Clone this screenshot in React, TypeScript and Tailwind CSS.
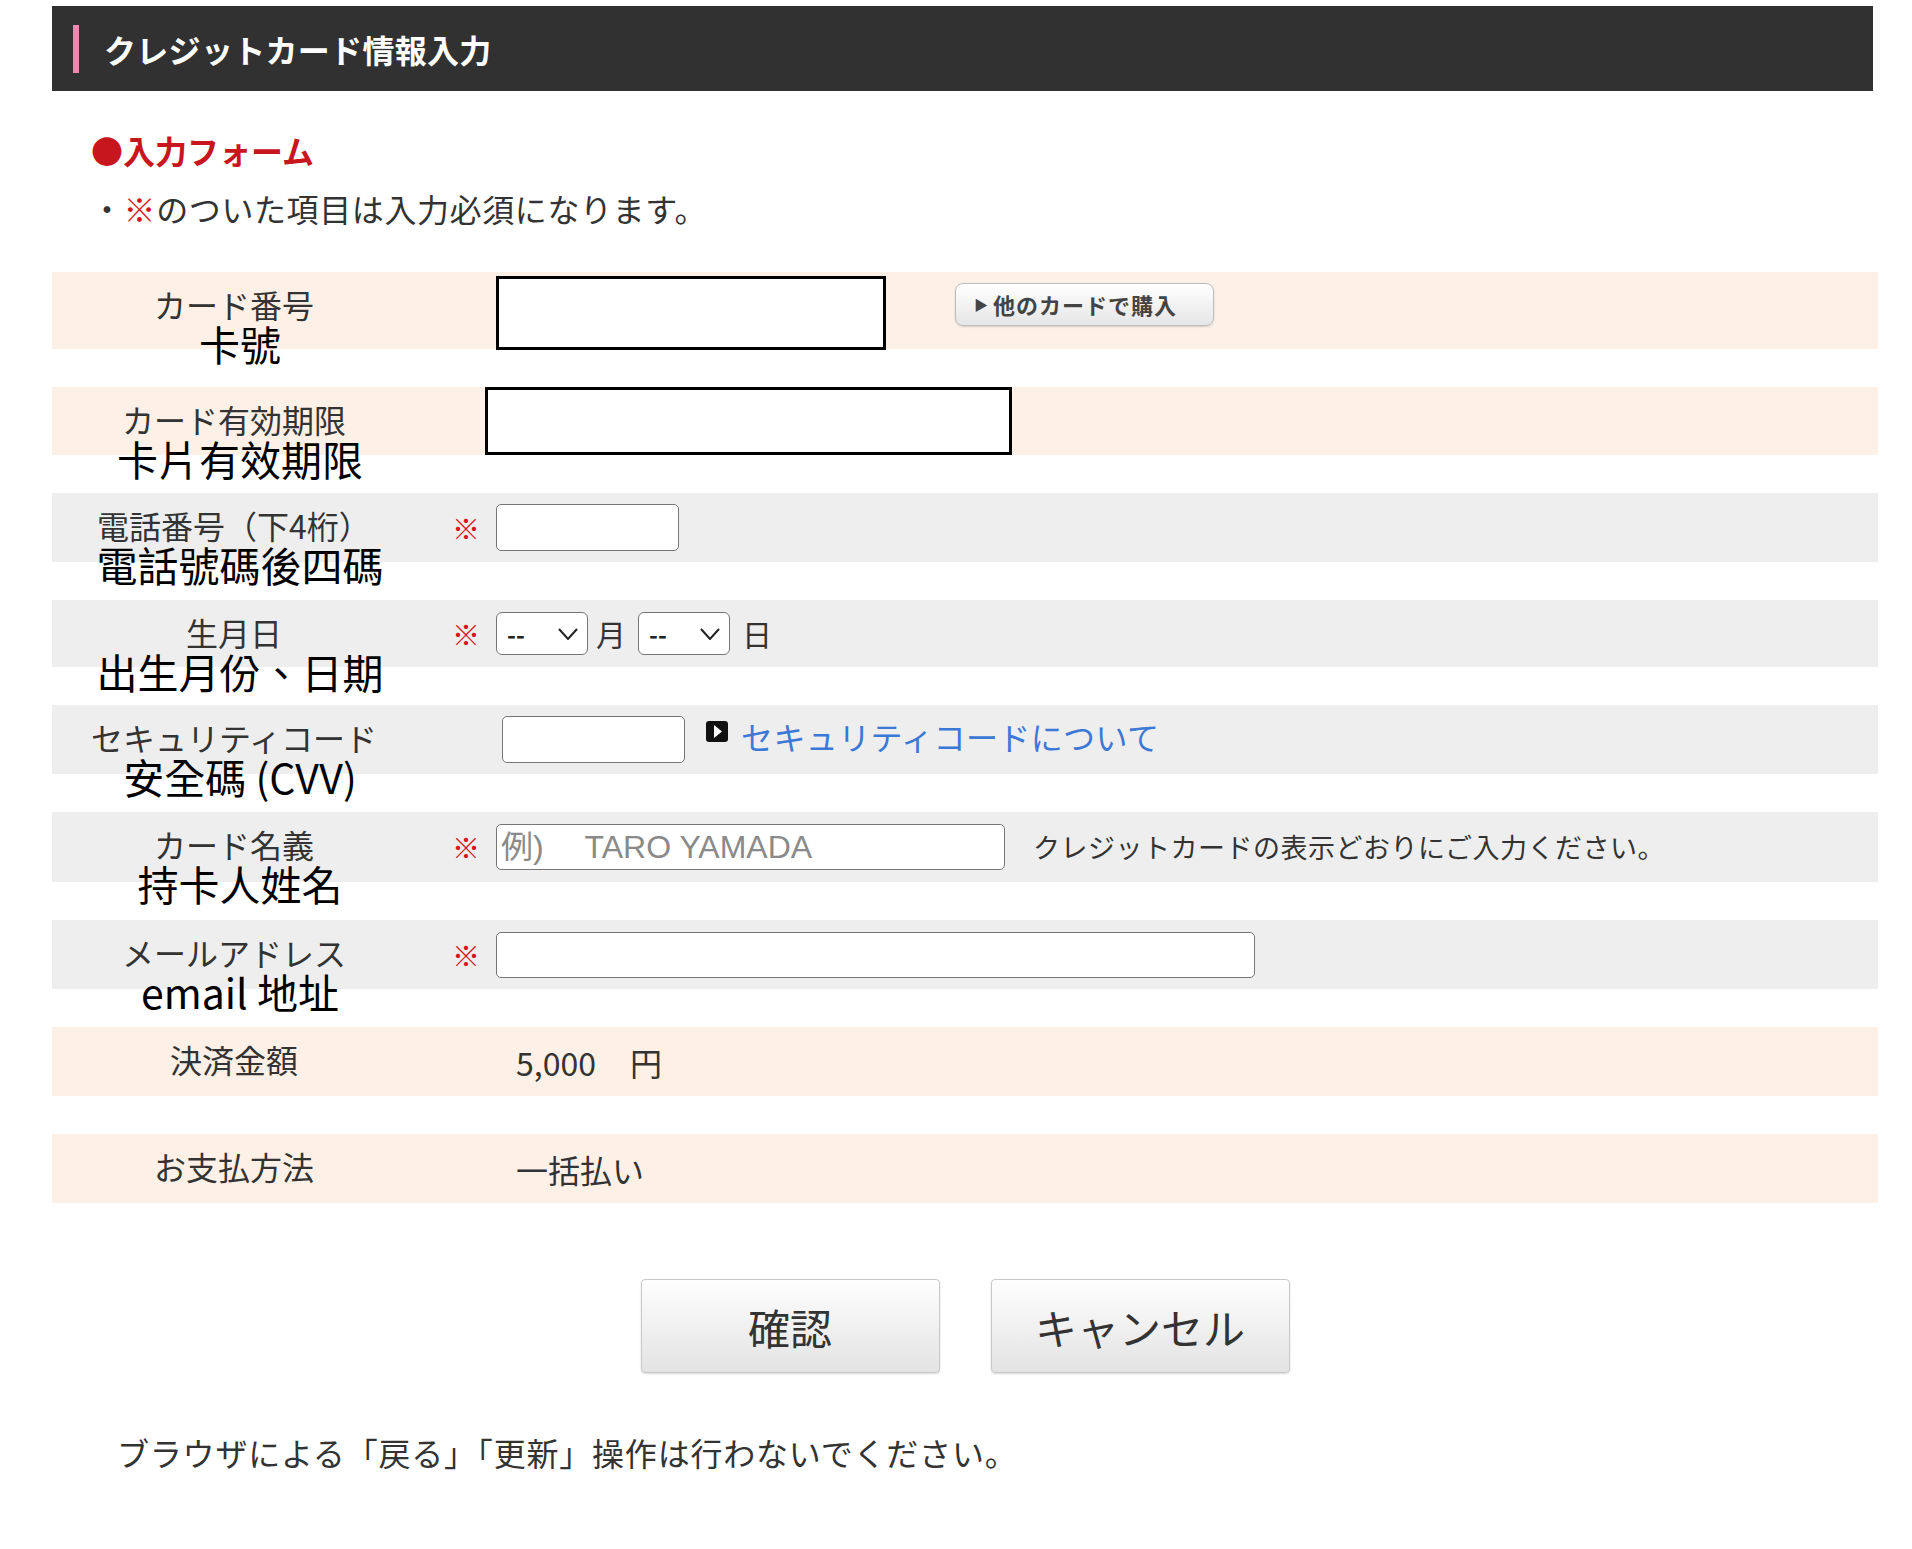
import React from 'react';

interface RowProps {
  bg: string;
  height: string;
  jp: string;
  zh?: string;
  required?: boolean;
  children?: React.ReactNode;
}

function Row({ bg, height, jp, zh, required, children }: RowProps) {
  return (
    <div className={`flex items-center ${bg} ${height}`}>
      <div className="w-[364px] shrink-0 self-start pt-[15px] text-center">
        <div className="text-[32px] leading-[34px] text-[#333] whitespace-nowrap">{jp}</div>
        {zh && (
          <div className="pl-[12px] text-[41px] leading-[44px] font-normal text-black whitespace-nowrap font-['Noto_Sans_CJK_TC','Noto_Sans_CJK_JP',sans-serif]">
            {zh}
          </div>
        )}
      </div>
      <div className="w-[80px] shrink-0 pl-[36px] text-[28px] leading-none text-[#d7141a]">
        {required ? '※' : ''}
      </div>
      <div className="flex flex-1 items-center">{children}</div>
    </div>
  );
}

function Chevron() {
  return (
    <svg width="20" height="12" viewBox="0 0 20 12" className="pointer-events-none absolute right-[10px] top-[16px]">
      <polyline points="1,1 10,11 19,1" fill="none" stroke="#222" strokeWidth="2" />
    </svg>
  );
}

function DateSelect() {
  return (
    <div className="relative">
      <select className="h-[43px] w-[92px] appearance-none rounded-[6px] border-[1.5px] border-[#767676] bg-white pl-[10px] text-[24px] font-bold text-[#222]">
        <option>--</option>
      </select>
      <Chevron />
    </div>
  );
}

const inputBase =
  'rounded-[5px] border-[1.5px] border-[#767676] bg-white px-[4px] text-[32px] outline-none';

export default function App() {
  return (
    <div className="min-h-screen bg-white text-[#333] font-['Noto_Sans_CJK_JP','Noto_Sans',sans-serif]">
      <div className="ml-[52px] w-[1826px] pt-[6px] pb-[80px]">
        <div className="flex h-[85px] w-[1821px] items-center bg-[#313131]">
          <div className="ml-[21px] h-[48px] w-[6px] bg-[#ef88ae]" />
          <h1 className="ml-[25px] text-[32px] font-bold text-white tracking-[0.3px]">クレジットカード情報入力</h1>
        </div>

        <div className="mt-[39px] pl-[39px] text-[32px] leading-[40px] font-bold text-[#c8161e]">
          ●入力フォーム
        </div>
        <div className="mt-[18px] pl-[39px] text-[32px] leading-[40px] tracking-[0.6px] text-[#333]">
          ・<span className="text-[#d7141a]">※</span>のついた項目は入力必須になります。
        </div>

        <div className="mt-[44px] flex flex-col gap-[38px]">
          <Row bg="bg-[#fdf0e6]" height="h-[77px]" jp="カード番号" zh="卡號">
            <div className="flex items-start self-stretch">
              <div className="mt-[4px] h-[74px] w-[390px] border-[3px] border-black bg-white" />
              <button className="ml-[69px] mt-[11px] flex h-[43px] w-[259px] items-center rounded-[8px] border border-[#bdbdbd] bg-linear-to-b from-[#ffffff] to-[#e6e6e6] pl-[18px] text-[22px] font-bold text-[#444] tracking-[1px] shadow-[0_1px_2px_rgba(0,0,0,0.15)]">
                <span className="mr-[4px] text-[14px]">▶</span>他のカードで購入
              </button>
            </div>
          </Row>

          <Row bg="bg-[#fdf0e6]" height="h-[68px]" jp="カード有効期限" zh="卡片有效期限">
            <div className="-ml-[11px] h-[68px] w-[527px] border-[3px] border-black bg-white" />
          </Row>

          <Row bg="bg-[#eeeeee]" height="h-[69px]" jp="電話番号（下4桁）" zh="電話號碼後四碼" required>
            <input className={`${inputBase} h-[47px] w-[183px]`} />
          </Row>

          <Row bg="bg-[#eeeeee]" height="h-[67px]" jp="生月日" zh="出生月份、日期" required>
            <div className="flex items-center">
              <DateSelect />
              <span className="ml-[8px] mr-[12px] text-[30px]">月</span>
              <DateSelect />
              <span className="ml-[12px] text-[30px]">日</span>
            </div>
          </Row>

          <Row bg="bg-[#eeeeee]" height="h-[69px]" jp="セキュリティコード" zh="安全碼 (CVV)">
            <div className="flex items-start">
              <input className={`${inputBase} ml-[6px] h-[47px] w-[183px]`} />
              <svg width="22" height="21" viewBox="0 0 22 21" className="ml-[21px] mt-[5px]">
                <rect x="0" y="0" width="22" height="21" rx="3" fill="#111" />
                <polygon points="8,4 16,10.5 8,17" fill="#fff" />
              </svg>
              <a className="ml-[13px] text-[32px] leading-[40px] tracking-[0.4px] text-[#3c78d6]">セキュリティコードについて</a>
            </div>
          </Row>

          <Row bg="bg-[#eeeeee]" height="h-[70px]" jp="カード名義" zh="持卡人姓名" required>
            <input
              className={`${inputBase} h-[46px] w-[509px] font-['Liberation_Sans','Noto_Sans_CJK_JP',sans-serif] placeholder:text-[#8a8a8a]`}
              placeholder="例)　 TARO YAMADA"
            />
            <span className="ml-[28px] text-[27px] tracking-[0.5px] text-[#333]">クレジットカードの表示どおりにご入力ください。</span>
          </Row>

          <Row bg="bg-[#eeeeee]" height="h-[69px]" jp="メールアドレス" zh="email 地址" required>
            <input className={`${inputBase} h-[46px] w-[759px]`} />
          </Row>

          <Row bg="bg-[#fdf0e6]" height="h-[69px]" jp="決済金額">
            <span className="pl-[20px] text-[32px] text-[#333]">5,000</span>
            <span className="ml-[34px] text-[32px] text-[#333]">円</span>
          </Row>

          <Row bg="bg-[#fdf0e6]" height="h-[69px]" jp="お支払方法">
            <span className="pl-[20px] text-[32px] text-[#333]">一括払い</span>
          </Row>
        </div>

        <div className="mt-[76px] flex justify-center gap-[51px]">
          <button className="h-[94px] w-[299px] rounded-[4px] border border-[#c9c9c9] bg-linear-to-b from-[#fefefe] to-[#e3e3e3] text-[42px] text-[#333] shadow-[0_1px_2px_rgba(0,0,0,0.15)]">
            確認
          </button>
          <button className="h-[94px] w-[299px] rounded-[4px] border border-[#c9c9c9] bg-linear-to-b from-[#fefefe] to-[#e3e3e3] text-[42px] text-[#333] shadow-[0_1px_2px_rgba(0,0,0,0.15)]">
            キャンセル
          </button>
        </div>

        <p className="mt-[59px] pl-[65px] text-[32px] leading-[40px] tracking-[0.8px] text-[#333]">
          ブラウザによる「戻る」「更新」操作は行わないでください。
        </p>
      </div>
    </div>
  );
}
